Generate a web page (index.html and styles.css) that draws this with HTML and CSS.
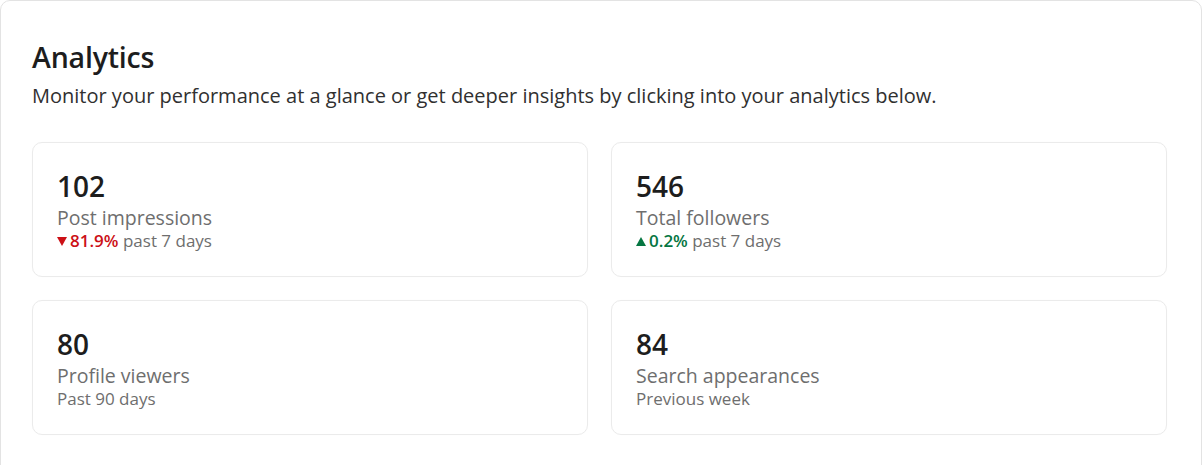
FILE: index.html
```html
<!DOCTYPE html>
<html lang="en">
<head>
<meta charset="utf-8">
<title>Analytics</title>
<link rel="stylesheet" href="styles.css">
</head>
<body>
<section class="panel">
  <h2 class="title">Analytics</h2>
  <p class="subtitle">Monitor your performance at a glance or get deeper insights by clicking into your analytics below.</p>
  <div class="grid">
    <div class="stat">
      <div class="value">102</div>
      <div class="label">Post impressions</div>
      <div class="meta"><span class="trend down"><svg class="tri" viewBox="0 0 10 9" width="10" height="9"><path d="M0 0H10L5 9Z"/></svg>81.9%</span> past 7 days</div>
    </div>
    <div class="stat">
      <div class="value">546</div>
      <div class="label">Total followers</div>
      <div class="meta"><span class="trend up"><svg class="tri" viewBox="0 0 10 9" width="10" height="9"><path d="M0 9H10L5 0Z"/></svg>0.2%</span> past 7 days</div>
    </div>
    <div class="stat">
      <div class="value">80</div>
      <div class="label">Profile viewers</div>
      <div class="meta">Past 90 days</div>
    </div>
    <div class="stat">
      <div class="value">84</div>
      <div class="label">Search appearances</div>
      <div class="meta">Previous week</div>
    </div>
  </div>
</section>
</body>
</html>
```
FILE: styles.css
```css
* { box-sizing: border-box; }
html, body { margin: 0; padding: 0; background: #ffffff; }
body {
  font-family: "Open Sans", "Noto Sans", "Liberation Sans", sans-serif;
  color: rgba(0,0,0,0.9);
}
.panel {
  width: 1202px;
  min-height: 480px;
  border: 1px solid #e3e3e3;
  border-radius: 10px;
  padding: 38px 0 0 31px;
  background: #fff;
}
.title {
  margin: 0;
  font-size: 28.5px;
  font-weight: 600;
  line-height: 36px;
  color: #1d1d1d;
  letter-spacing: -0.2px;
}
.subtitle {
  margin: 6px 0 0;
  font-size: 20px;
  line-height: 30px;
  color: #303030;
}
.grid {
  margin-top: 31px;
  display: grid;
  grid-template-columns: 556px 556px;
  column-gap: 23px;
  row-gap: 23px;
}
.stat {
  height: 135px;
  border: 1px solid #ebebeb;
  border-radius: 10px;
  padding: 26px 24px 0 24px;
  box-shadow: 0 0 1px rgba(0,0,0,0.04);
}
.value {
  font-size: 28px;
  font-weight: 600;
  line-height: 34px;
  color: #1d1d1d;
}
.label {
  font-size: 19.5px;
  line-height: 28px;
  color: #6e6e6e;
  margin-top: 1px;
}
.meta {
  margin-top: -2px;
  font-size: 17px;
  line-height: 22px;
  color: #6e6e6e;
}
.trend { font-weight: 600; }
.trend.down { color: #cc1016; }
.trend.up { color: #057642; }
.tri { fill: currentColor; margin-right: 3px; vertical-align: 1px; }
```
